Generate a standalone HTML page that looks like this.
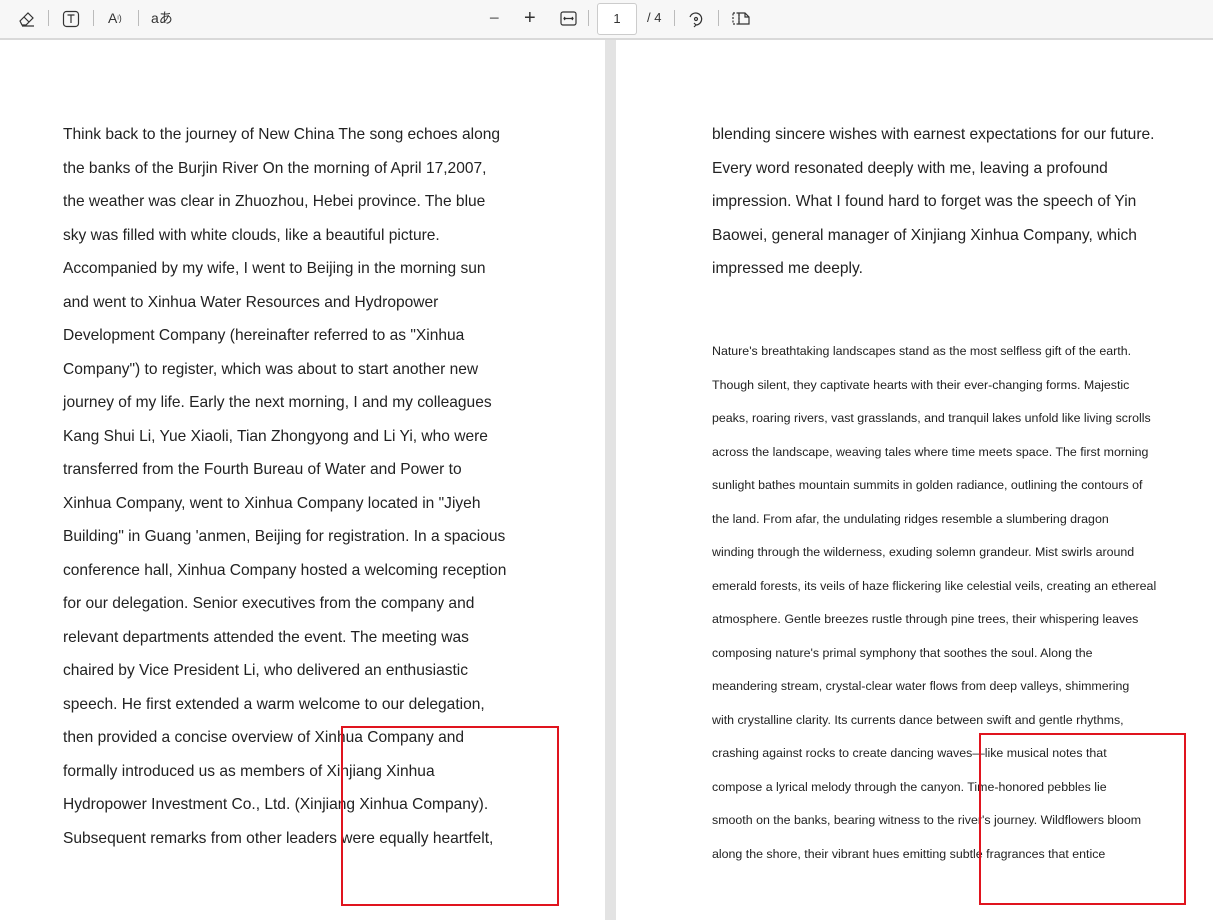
<!DOCTYPE html><html><head><meta charset="utf-8"><style>
body{margin:0;width:1213px;height:920px;overflow:hidden;background:#fff;font-family:"Liberation Sans","Noto Sans CJK SC",sans-serif;position:relative}
.tb{position:absolute;left:0;top:0;width:1213px;height:38px;background:#f7f7f7;border-bottom:2px solid #d9d9d9}
.gap{position:absolute;left:605px;top:40px;width:11px;height:880px;background:#e3e3e3}
.t{position:absolute;color:#222;white-space:nowrap}
.L{left:63px;top:118px;font-size:15.55px;line-height:33.5px}
.R1{left:712px;top:118px;font-size:15.55px;line-height:33.5px}
.R2{left:712px;top:335px;font-size:12.4px;line-height:33.5px}
.box{position:absolute;border:2px solid #e0141e}
.sep{position:absolute;top:10px;width:1px;height:16px;background:#bbb}
.ic{position:absolute;top:0;height:38px;line-height:36px;font-size:14px;color:#333}
</style></head><body>
<div class="tb">
<svg style="position:absolute;left:17px;top:9px" width="20" height="20" viewBox="0 0 20 20" fill="none" stroke="#333" stroke-width="1.2"><path d="M3 12 L11 4 L16 9 L9 16 H5 Z M7 8 L12 13 M5 17 H17"/></svg>
<div class="sep" style="left:48px"></div>
<svg style="position:absolute;left:62px;top:10px" width="18" height="18" viewBox="0 0 18 18" fill="none" stroke="#333" stroke-width="1.2"><rect x="1.5" y="1.5" width="15" height="15" rx="3"/><path d="M5.5 5 H12.5 M9 5 V13"/></svg>
<div class="sep" style="left:93px"></div>
<div class="ic" style="left:108px">A<span style="font-size:9px;vertical-align:top">ᵎ)</span></div>
<div class="sep" style="left:138px"></div>
<div class="ic" style="left:151px">aあ</div>
<div class="ic" style="left:489px;font-size:18px;color:#666">−</div>
<div class="ic" style="left:524px;font-size:20px">+</div>
<svg style="position:absolute;left:560px;top:11px" width="17" height="15" viewBox="0 0 17 15" fill="none" stroke="#333" stroke-width="1.2"><rect x="1" y="1" width="15" height="13" rx="2"/><path d="M4 7.5 H13 M5 6 L4 7.5 L5 9 M12 6 L13 7.5 L12 9"/></svg>
<div class="sep" style="left:588px"></div>
<div style="position:absolute;left:597px;top:3px;width:38px;height:30px;background:#fff;border:1px solid #ccc;border-radius:3px;font-size:13px;line-height:30px;text-align:center;color:#333">1</div>
<div class="ic" style="left:647px;font-size:13px">/ 4</div>
<div class="sep" style="left:674px"></div>
<svg style="position:absolute;left:686px;top:9px" width="20" height="20" viewBox="0 0 20 20" fill="none" stroke="#333" stroke-width="1.2"><path d="M4 8 A6 6 0 1 1 10 16 M8 14 L10 16 L8 18"/><circle cx="10" cy="10" r="1.5"/></svg>
<div class="sep" style="left:718px"></div>
<svg style="position:absolute;left:731px;top:10px" width="20" height="17" viewBox="0 0 20 17" fill="none" stroke="#333" stroke-width="1.2"><path d="M2 3 H8 V14 H2 Z" stroke-dasharray="2 1.5"/><path d="M8 3 H14 L18 7 V14 H8 Z M14 3 V7 H18"/></svg>
</div>
<div class="gap"></div>
<div class="t L">Think back to the journey of New China The song echoes along<br>the banks of the Burjin River On the morning of April 17,2007,<br>the weather was clear in Zhuozhou, Hebei province. The blue<br>sky was filled with white clouds, like a beautiful picture.<br>Accompanied by my wife, I went to Beijing in the morning sun<br>and went to Xinhua Water Resources and Hydropower<br>Development Company (hereinafter referred to as "Xinhua<br>Company") to register, which was about to start another new<br>journey of my life. Early the next morning, I and my colleagues<br>Kang Shui Li, Yue Xiaoli, Tian Zhongyong and Li Yi, who were<br>transferred from the Fourth Bureau of Water and Power to<br>Xinhua Company, went to Xinhua Company located in "Jiyeh<br>Building" in Guang 'anmen, Beijing for registration. In a spacious<br>conference hall, Xinhua Company hosted a welcoming reception<br>for our delegation. Senior executives from the company and<br>relevant departments attended the event. The meeting was<br>chaired by Vice President Li, who delivered an enthusiastic<br>speech. He first extended a warm welcome to our delegation,<br>then provided a concise overview of Xinhua Company and<br>formally introduced us as members of Xinjiang Xinhua<br>Hydropower Investment Co., Ltd. (Xinjiang Xinhua Company).<br>Subsequent remarks from other leaders were equally heartfelt,</div>
<div class="t R1">blending sincere wishes with earnest expectations for our future.<br>Every word resonated deeply with me, leaving a profound<br>impression. What I found hard to forget was the speech of Yin<br>Baowei, general manager of Xinjiang Xinhua Company, which<br>impressed me deeply.</div>
<div class="t R2">Nature's breathtaking landscapes stand as the most selfless gift of the earth.<br>Though silent, they captivate hearts with their ever-changing forms. Majestic<br>peaks, roaring rivers, vast grasslands, and tranquil lakes unfold like living scrolls<br>across the landscape, weaving tales where time meets space. The first morning<br>sunlight bathes mountain summits in golden radiance, outlining the contours of<br>the land. From afar, the undulating ridges resemble a slumbering dragon<br>winding through the wilderness, exuding solemn grandeur. Mist swirls around<br>emerald forests, its veils of haze flickering like celestial veils, creating an ethereal<br>atmosphere. Gentle breezes rustle through pine trees, their whispering leaves<br>composing nature's primal symphony that soothes the soul. Along the<br>meandering stream, crystal-clear water flows from deep valleys, shimmering<br>with crystalline clarity. Its currents dance between swift and gentle rhythms,<br>crashing against rocks to create dancing waves—like musical notes that<br>compose a lyrical melody through the canyon. Time-honored pebbles lie<br>smooth on the banks, bearing witness to the river's journey. Wildflowers bloom<br>along the shore, their vibrant hues emitting subtle fragrances that entice</div>
<div class="box" style="left:341px;top:726px;width:214px;height:176px"></div>
<div class="box" style="left:979px;top:733px;width:203px;height:168px"></div>
</body></html>
